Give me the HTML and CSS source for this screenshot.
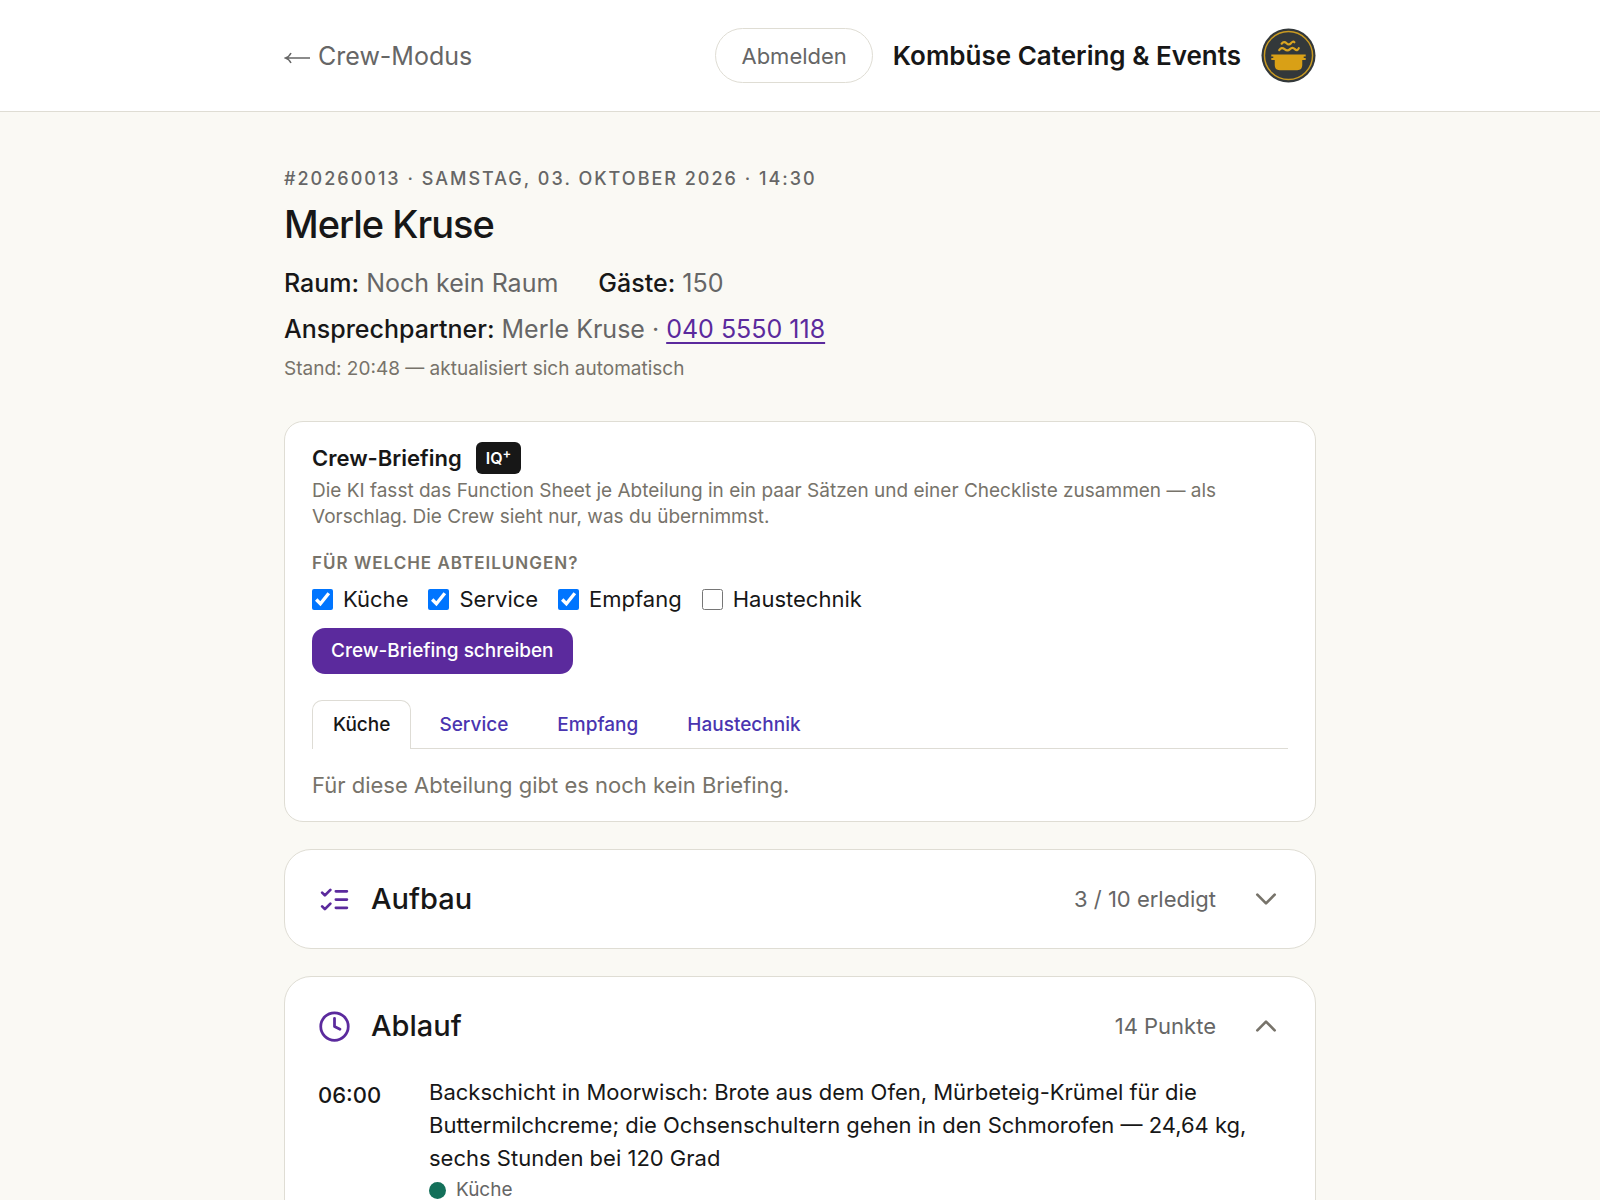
FILE: index.html
```html
<!DOCTYPE html>
<html lang="de">
<head>
<meta charset="utf-8">
<meta name="viewport" content="width=device-width, initial-scale=1">
<title>Merle Kruse – Crew-Modus</title>
<link rel="stylesheet" href="styles.css">
</head>
<body>
<header class="topbar">
  <div class="container topbar-inner">
    <a class="back" href="#"><svg class="back-arrow" viewBox="0 0 26 18" aria-hidden="true"><path d="M26 11H2M7 6Q5 10 1.500 11Q5 12 7 16"/></svg>Crew-Modus</a>
    <div class="account">
      <button class="logout" type="button">Abmelden</button>
      <span class="company">Kombüse Catering &amp; Events</span>
      <svg class="logo" viewBox="0 0 56 56" aria-hidden="true">
        <circle cx="28" cy="28" r="27.500" fill="#33383a"/>
        <circle cx="28" cy="28" r="24.500" fill="none" stroke="#c99a22" stroke-width="1.500"/>
        <path d="M21 16q2.500-3 5 -.5t4.500 0 3.500-1M18.500 22.500q2.500-3.500 5.500-1t5.500 0 5 0 4-1" fill="none" stroke="#d9a520" stroke-width="2.200" stroke-linecap="round"/>
        <path d="M10.500 27h35v2h-2v1.500h2v2H42v5.500q0 5-5 5H19q-5 0-5-5v-5.500h-3.500v-2h2V29h-2z" fill="#d9a016"/>
      </svg>
    </div>
  </div>
</header>

<main class="container page">
  <section class="event">
    <p class="eyebrow">#20260013 · Samstag, 03. Oktober 2026 · 14:30</p>
    <h1 class="event-title">Merle Kruse</h1>
    <div class="facts">
      <p class="fact"><strong>Raum:</strong> Noch kein Raum</p>
      <p class="fact"><strong>Gäste:</strong> 150</p>
    </div>
    <p class="fact"><strong>Ansprechpartner:</strong> Merle Kruse · <a class="phone" href="tel:0405550118">040 5550 118</a></p>
    <p class="updated">Stand: 20:48 — aktualisiert sich automatisch</p>
  </section>

  <section class="card briefing">
    <div class="briefing-head">
      <h2 class="briefing-title">Crew-Briefing</h2>
      <span class="badge">IQ<sup class="badge-plus">+</sup></span>
    </div>
    <p class="hint">Die KI fasst das Function Sheet je Abteilung in ein paar Sätzen und einer Checkliste zusammen — als Vorschlag. Die Crew sieht nur, was du übernimmst.</p>
    <fieldset class="departments">
      <legend class="legend">Für welche Abteilungen?</legend>
      <div class="checks">
        <label class="check"><input type="checkbox" checked>Küche</label>
        <label class="check"><input type="checkbox" checked>Service</label>
        <label class="check"><input type="checkbox" checked>Empfang</label>
        <label class="check"><input type="checkbox">Haustechnik</label>
      </div>
    </fieldset>
    <button class="primary" type="button">Crew-Briefing schreiben</button>
    <div class="tabs" role="tablist">
      <button class="tab tab-active" type="button" role="tab" aria-selected="true">Küche</button>
      <button class="tab" type="button" role="tab" aria-selected="false">Service</button>
      <button class="tab" type="button" role="tab" aria-selected="false">Empfang</button>
      <button class="tab" type="button" role="tab" aria-selected="false">Haustechnik</button>
    </div>
    <p class="empty">Für diese Abteilung gibt es noch kein Briefing.</p>
  </section>

  <section class="card panel">
    <h2 class="panel-heading">
      <button class="panel-toggle" type="button" aria-expanded="false">
        <svg class="panel-icon" viewBox="0 0 24 24" aria-hidden="true"><path d="M13 6h8M13 12h8M13 18h8M3 17l2 2 4-4M3 7l2 2 4-4"/></svg>
        <span class="panel-title">Aufbau</span>
        <span class="panel-meta">3 / 10 erledigt</span>
        <svg class="chevron" viewBox="0 0 24 24" aria-hidden="true"><path d="m4 8 8 8 8-8"/></svg>
      </button>
    </h2>
  </section>

  <section class="card panel">
    <h2 class="panel-heading">
      <button class="panel-toggle" type="button" aria-expanded="true">
        <svg class="panel-icon" viewBox="0 0 24 24" aria-hidden="true"><circle cx="12" cy="12" r="10"/><path d="M12 6v6l4 2"/></svg>
        <span class="panel-title">Ablauf</span>
        <span class="panel-meta">14 Punkte</span>
        <svg class="chevron" viewBox="0 0 24 24" aria-hidden="true"><path d="m4 16 8-8 8 8"/></svg>
      </button>
    </h2>
    <ol class="schedule">
      <li class="slot">
        <time class="slot-time">06:00</time>
        <div class="slot-body">
          <p class="slot-text">Backschicht in Moorwisch: Brote aus dem Ofen, Mürbeteig-Krümel für die Buttermilchcreme; die Ochsenschultern gehen in den Schmorofen — 24,64 kg, sechs Stunden bei 120 Grad</p>
          <p class="slot-tag"><span class="dot"></span>Küche</p>
        </div>
      </li>
    </ol>
  </section>
</main>
</body>
</html>
```

FILE: styles.css
```css
* { box-sizing: border-box; }

body {
  margin: 0;
  background: #faf9f4;
  color: #171717;
  font-family: Inter, "Liberation Sans", sans-serif;
  font-size: 22px;
  line-height: 32px;
}

h1, h2, p, ol { margin: 0; padding: 0; }
ol { list-style: none; }
button { font: inherit; color: inherit; cursor: pointer; }

.container {
  width: 100%;
  max-width: 1088px;
  margin: 0 auto;
  padding: 0 28px;
}

/* Top bar */
.topbar { background: #fff; border-bottom: 1px solid #dfddd4; }
.topbar-inner {
  display: flex;
  align-items: center;
  justify-content: space-between;
  padding-top: 28px;
  padding-bottom: 28px;
}
.back {
  display: flex;
  align-items: center;
  gap: 8px;
  color: #666;
  font-size: 25px;
  text-decoration: none;
}
.back-arrow {
  width: 26px;
  height: 18px;
  fill: none;
  stroke: #666;
  stroke-width: 1.5;
}
.account { display: flex; align-items: center; gap: 20px; }
.logout {
  height: 55px;
  padding: 0 25px;
  border: 1px solid #dfddd4;
  border-radius: 28px;
  background: #fff;
  color: #666;
}
.company { font-size: 26px; font-weight: 600; }
.logo { width: 55px; height: 55px; }

/* Event summary */
.page { padding-top: 53px; padding-bottom: 56px; }
.event { margin-bottom: 37px; }
.eyebrow {
  color: #666;
  font-size: 18px;
  line-height: 28px;
  font-weight: 500;
  letter-spacing: 2px;
  text-transform: uppercase;
}
.event-title {
  margin: 6px 0 11px;
  font-size: 38px;
  line-height: 50px;
  font-weight: 500;
  letter-spacing: -1px;
}
.facts { display: flex; gap: 40px; }
.fact { color: #666; font-size: 25px; line-height: 46px; }
.fact strong { color: #171717; font-weight: 500; }
.phone { color: #5b2a9d; text-underline-offset: 4px; text-decoration-thickness: 2px; }
.updated { margin-top: 2px; color: #77736a; font-size: 19px; line-height: 30px; }

/* Cards */
.card {
  margin-bottom: 27px;
  border: 1px solid #dfddd4;
  background: #fff;
}

/* Briefing */
.briefing { padding: 20px 27px; border-radius: 19px; }
.briefing-head { display: flex; align-items: center; gap: 14px; }
.briefing-title { font-size: 22px; line-height: 32px; font-weight: 600; }
.badge {
  padding: 0 10px;
  border-radius: 6px;
  background: #171717;
  color: #fff;
  font-size: 16px;
  line-height: 32px;
  font-weight: 600;
}
.badge-plus { font-size: 13px; line-height: 0; }
.hint { margin-top: 4px; color: #77736a; font-size: 19px; line-height: 26px; }
.departments { margin: 20px 0 13px; padding: 0; border: 0; }
.legend {
  padding: 0;
  color: #77736a;
  font-size: 17px;
  line-height: 26px;
  font-weight: 600;
  letter-spacing: 1px;
  text-transform: uppercase;
}
.checks { display: flex; flex-wrap: wrap; gap: 20px; margin-top: 7px; }
.check { display: flex; align-items: center; gap: 10px; }
.check input { width: 21px; height: 21px; margin: 0; }
.primary {
  height: 46px;
  padding: 0 19px;
  border: 0;
  border-radius: 13px;
  background: #5b2a9d;
  color: #fff;
  font-size: 19px;
  font-weight: 500;
}
.tabs {
  display: flex;
  gap: 7px;
  margin-top: 26px;
  border-bottom: 1px solid #dedcd5;
}
.tab {
  height: 49px;
  margin-bottom: -1px;
  padding: 0 20px;
  border: 1px solid transparent;
  border-bottom: 0;
  border-radius: 10px 10px 0 0;
  background: none;
  color: #4a35b0;
  font-size: 19px;
  font-weight: 500;
}
.tab-active { border-color: #dedcd5; background: #fff; color: #171717; }
.empty { margin-top: 20px; color: #77736a; }

/* Collapsible panels */
.panel { border-radius: 27px; }
.panel-heading { font-size: 22px; font-weight: 400; }
.panel-toggle {
  display: flex;
  align-items: center;
  width: 100%;
  height: 98px;
  padding: 0 36px 0 33px;
  border: 0;
  background: none;
  text-align: left;
}
.panel-icon {
  width: 33px;
  height: 33px;
  fill: none;
  stroke: #5b2a9d;
  stroke-width: 2;
  stroke-linecap: round;
  stroke-linejoin: round;
}
.panel-title { margin-left: 20px; font-size: 29px; font-weight: 500; }
.panel-meta { margin-left: auto; color: #666; }
.chevron {
  width: 26px;
  height: 26px;
  margin-left: 37px;
  fill: none;
  stroke: #77736a;
  stroke-width: 2.5;
  stroke-linecap: round;
  stroke-linejoin: round;
}

/* Schedule */
.schedule { padding: 1px 33px 32px; }
.slot { display: grid; grid-template-columns: 91px 1fr; gap: 20px; }
.slot-time { padding-top: 3px; font-weight: 500; line-height: 33px; }
.slot-text { line-height: 33px; }
.slot-tag {
  display: flex;
  align-items: center;
  gap: 10px;
  color: #666;
  font-size: 19px;
  line-height: 30px;
}
.dot { width: 17px; height: 17px; border-radius: 50%; background: #14705a; }
```
